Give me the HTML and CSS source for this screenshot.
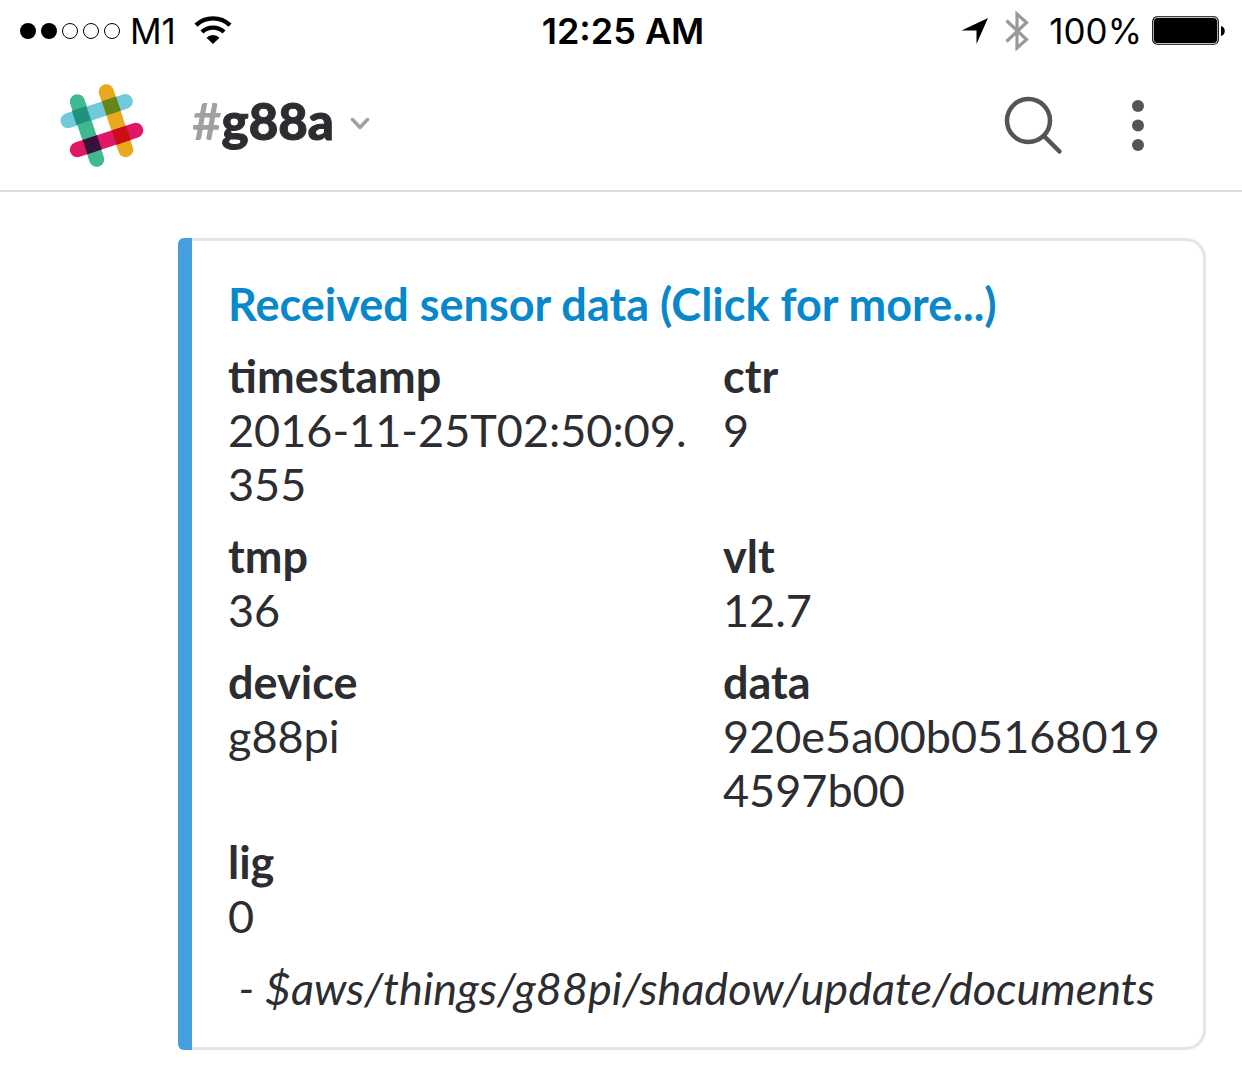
FILE: index.html
```html
<!DOCTYPE html>
<html lang="en">
<head>
<meta charset="utf-8">
<meta name="viewport" content="width=device-width, initial-scale=1">
<title>#g88a</title>
<link rel="stylesheet" href="styles.css">
</head>
<body>
<div class="status-bar">
  <div class="status-side">
    <svg class="signal" width="100" height="16" viewBox="0 0 100 16" aria-hidden="true">
      <circle cx="8" cy="8" r="8"/><circle cx="29" cy="8" r="8"/>
      <g fill="none" stroke="#000" stroke-width="1"><circle cx="50" cy="8" r="7.5"/><circle cx="71" cy="8" r="7.5"/><circle cx="92" cy="8" r="7.5"/></g>
    </svg>
    <span class="carrier">M1</span>
    <svg class="wifi" width="38" height="30" viewBox="0 0 38 30" aria-hidden="true">
      <g fill="none" stroke="#000" stroke-width="4.400"><path d="M2 9.200a24.500 24.500 0 0 1 34 0"/><path d="M8 16a16 16 0 0 1 22 0"/></g>
      <path d="M19 28l-6.500-6.200a9 9 0 0 1 13 0z"/>
    </svg>
  </div>
  <time class="clock">12:25 AM</time>
  <div class="status-side status-right">
    <svg width="28" height="28" viewBox="0 0 28 28" aria-hidden="true"><path d="M27 1L15.500 27V13.500H0.500z"/></svg>
    <svg class="bluetooth" width="24" height="42" viewBox="0 0 24 42" aria-hidden="true"><path d="M1.500 10.500L21.500 29.500 12 38V4L21.500 12.500 1.500 31.500" fill="none" stroke="#999" stroke-width="3.200"/></svg>
    <span class="charge">100%</span>
    <svg class="battery" width="74" height="30" viewBox="0 0 74 30" aria-hidden="true">
      <rect x=".75" y=".75" width="65.500" height="27.500" rx="4.500" fill="#fff" stroke="#000" stroke-width="1.200"/>
      <rect x="2" y="2" width="63" height="25" rx="3.500"/>
      <path d="M69 10c5 1 5 9 0 10z"/>
    </svg>
  </div>
</div>

<header class="app-header">
  <svg class="logo" width="84" height="84" viewBox="60 84 84 84" role="img" aria-label="Slack">
    <g stroke-width="15" stroke-linecap="round">
      <path d="M68 120.700L125.300 101.500" stroke="#70cadb"/>
      <path d="M77.400 101.700L96.700 159.300" stroke="#3eb991"/>
      <path d="M106.300 91.700L125.700 149.700" stroke="#e9a820"/>
      <path d="M77.400 149.700L135.700 130.300" stroke="#e01765"/>
    </g>
    <g>
      <rect x="-7.500" y="-7.500" width="15" height="15" transform="translate(81.300 115.600) rotate(-18.500)" fill="#1d937d"/>
      <rect x="-7.500" y="-7.500" width="15" height="15" transform="translate(111.300 106) rotate(-18.500)" fill="#65861b"/>
      <rect x="-7.500" y="-7.500" width="15" height="15" transform="translate(92.200 144.800) rotate(-18.500)" fill="#361238"/>
      <rect x="-7.500" y="-7.500" width="15" height="15" transform="translate(121.300 135.200) rotate(-18.500)" fill="#cb0e13"/>
    </g>
  </svg>
  <button class="channel" type="button">
    <span class="hash">#</span><span class="channel-name">g88a</span>
    <svg class="chevron" width="20" height="14" viewBox="0 0 20 14" aria-hidden="true"><path d="M2.500 2.500L10 10.500 17.500 2.500" fill="none" stroke="#a0a0a2" stroke-width="3.500" stroke-linecap="round" stroke-linejoin="round"/></svg>
  </button>
  <div class="actions">
    <button type="button" aria-label="Search">
      <svg width="60" height="60" viewBox="0 0 60 60"><g fill="none" stroke="#555459" stroke-width="4.500"><circle cx="24.500" cy="24.500" r="21.500"/><path d="M40.500 40.500L55.500 55.500" stroke-linecap="round"/></g></svg>
    </button>
    <button type="button" aria-label="More options">
      <svg width="12" height="52" viewBox="0 0 12 52" fill="#555459"><circle cx="6" cy="6" r="6"/><circle cx="6" cy="25.500" r="6"/><circle cx="6" cy="45" r="6"/></svg>
    </button>
  </div>
</header>

<main class="messages">
  <article class="attachment">
    <h2 class="title"><a href="#more">Received sensor data (Click for more...)</a></h2>
    <dl class="fields">
      <div><dt>timestamp</dt><dd>2016-11-25T02:50:09.355</dd></div>
      <div><dt>ctr</dt><dd>9</dd></div>
      <div><dt>tmp</dt><dd>36</dd></div>
      <div><dt>vlt</dt><dd>12.7</dd></div>
      <div><dt>device</dt><dd>g88pi</dd></div>
      <div><dt>data</dt><dd>920e5a00b051680194597b00</dd></div>
      <div><dt>lig</dt><dd>0</dd></div>
    </dl>
    <p class="topic">&nbsp;- $aws/things/g88pi/shadow/update/documents</p>
  </article>
</main>
</body>
</html>
```
FILE: styles.css
```css
* {
  box-sizing: border-box;
}

body {
  margin: 0;
  background: #fff;
  color: #2c2d30;
  font: 45px/54px Lato, sans-serif;
}

svg {
  display: block;
  flex: none;
}

button {
  padding: 0;
  border: 0;
  background: none;
  color: inherit;
  font: inherit;
  cursor: pointer;
}

.status-bar {
  display: grid;
  grid-template-columns: 1fr auto 1fr;
  align-items: center;
  height: 62px;
  padding: 0 16px 0 20px;
  color: #000;
  font: 35px/62px Inter, sans-serif;
}

.status-side {
  display: flex;
  align-items: center;
}

.status-right {
  justify-content: flex-end;
}

.carrier {
  margin: 0 18px 0 10px;
}

.clock {
  font-size: 36px;
  font-weight: 600;
}

.bluetooth {
  margin: 0 20px 0 16px;
}

.battery {
  margin-left: 10px;
}

.app-header {
  display: flex;
  align-items: center;
  height: 130px;
  padding: 0 98px 0 60px;
  border-bottom: 2px solid #dcdcdc;
}

.channel {
  display: flex;
  align-items: center;
  margin-left: 48px;
  padding-bottom: 4px;
  font-size: 51px;
  font-weight: 700;
  line-height: 60px;
}

.hash,
.channel-name {
  padding-bottom: 6px;
}

.hash {
  color: #a0a0a2;
}

.channel-name {
  font-weight: 900;
  -webkit-text-stroke: 1px;
}

.chevron {
  margin-left: 16px;
}

.actions {
  display: flex;
  align-items: center;
  gap: 68px;
  margin-left: auto;
}

.messages {
  padding: 46px 36px 16px 178px;
}

.attachment {
  position: relative;
  padding: 36px 21px 32px 50px;
  border: 3px solid #e5e5e5;
  border-left: 0;
  border-radius: 6px 20px 20px 6px;
}

/* Coloured stripe over the card's left edge */
.attachment::before {
  content: "";
  position: absolute;
  top: -3px;
  bottom: -3px;
  left: 0;
  width: 14px;
  border-radius: 6px 0 0 6px;
  background: #459fde;
}

.title {
  margin: 0 0 18px;
  font-size: inherit;
  font-weight: 700;
}

.title a {
  color: #0888ca;
  text-decoration: none;
}

.fields {
  display: grid;
  grid-template-columns: 1fr 1fr;
  gap: 18px 36px;
  margin: 0 0 18px;
}

.fields dt {
  font-weight: 700;
}

.fields dd {
  margin: 0;
  word-break: break-all;
}

.topic {
  margin: 0;
  font-style: italic;
}
```
